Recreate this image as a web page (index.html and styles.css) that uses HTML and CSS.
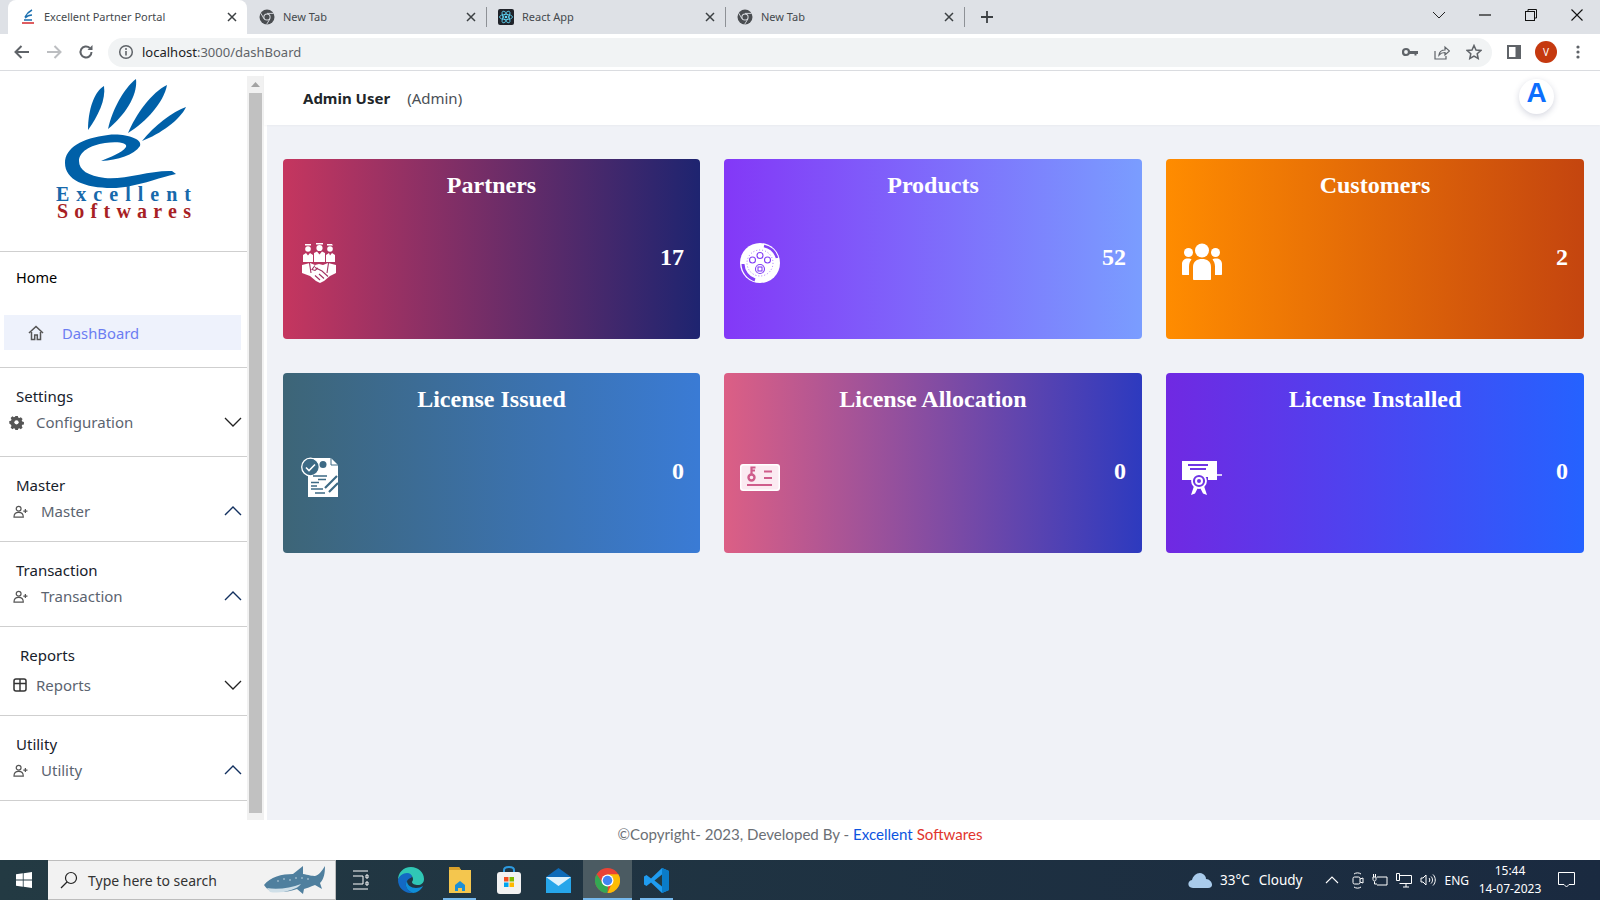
FILE: index.html
```html
<!DOCTYPE html>
<html lang="en">
<head>
<meta charset="utf-8">
<title>Excellent Partner Portal</title>
<link rel="stylesheet" href="styles.css">
</head>
<body>
<svg class="defs" width="0" height="0">
  <symbol id="chrome-fav" viewBox="0 0 16 16"><circle cx="8" cy="8" r="7.5" fill="#4a4d51"/><circle cx="8" cy="8" r="3.6" fill="#dee1e6"/><circle cx="8" cy="8" r="2.6" fill="#4a4d51"/><path d="M8 4.4h6.6M5 9.8 1.8 4.2M11 9.8 7.6 15.4" stroke="#dee1e6" stroke-width=".9"/></symbol>
  <symbol id="x" viewBox="0 0 12 12"><path d="M2 2l8 8M10 2l-8 8" stroke="#3c4043" stroke-width="1.5" fill="none"/></symbol>
  <symbol id="down" viewBox="0 0 18 10"><path d="M1 1l8 8 8-8" stroke="#222" stroke-width="1.3" fill="none"/></symbol>
  <symbol id="up" viewBox="0 0 18 10"><path d="M1 9l8-8 8 8" stroke="#12305f" stroke-width="1.4" fill="none"/></symbol>
  <symbol id="useradd" viewBox="0 0 16 14"><circle cx="6" cy="4" r="2.6" fill="none" stroke="#555" stroke-width="1.3"/><path d="M1 13c0-3.5 2-5 5-5s5 1.500 5 5z" fill="none" stroke="#555" stroke-width="1.3"/><path d="M11 6.500h4.500M13.250 4.300v4.400" stroke="#555" stroke-width="1.300"/></symbol>
</svg>

<header class="tabstrip">
  <div class="tab tab-active">
    <svg class="fav" viewBox="0 0 16 16"><path d="M5 8C7 4 10 2 12 1M5 9c2-2 5-3 7-3M4 11h8" stroke="#1a6fb0" stroke-width="1.400" fill="none"/><path d="M2 14h12" stroke="#d3272d" stroke-width="1.500"/></svg>
    <span class="tab-title">Excellent Partner Portal</span>
    <svg class="tab-x"><use href="#x"/></svg>
  </div>
  <div class="tab tab-sep">
    <svg class="fav"><use href="#chrome-fav"/></svg>
    <span class="tab-title">New Tab</span>
    <svg class="tab-x"><use href="#x"/></svg>
  </div>
  <div class="tab tab-sep">
    <svg class="fav" viewBox="0 0 16 16"><rect width="16" height="16" rx="2" fill="#20232a"/><g fill="none" stroke="#61dafb" stroke-width=".8"><ellipse cx="8" cy="8" rx="6.500" ry="2.600"/><ellipse cx="8" cy="8" rx="6.500" ry="2.600" transform="rotate(60 8 8)"/><ellipse cx="8" cy="8" rx="6.500" ry="2.600" transform="rotate(120 8 8)"/></g><circle cx="8" cy="8" r="1.300" fill="#61dafb"/></svg>
    <span class="tab-title">React App</span>
    <svg class="tab-x"><use href="#x"/></svg>
  </div>
  <div class="tab tab-sep">
    <svg class="fav"><use href="#chrome-fav"/></svg>
    <span class="tab-title">New Tab</span>
    <svg class="tab-x"><use href="#x"/></svg>
  </div>
  <svg class="newtab" viewBox="0 0 14 14"><path d="M7 1v12M1 7h12" stroke="#3c4043" stroke-width="1.800"/></svg>
  <div class="winctrls">
    <span class="winbtn"><svg width="14" height="8" viewBox="0 0 14 8"><path d="M1 1l6 6 6-6" stroke="#222" fill="none"/></svg></span>
    <span class="winbtn"><svg width="12" height="2" viewBox="0 0 12 2"><path d="M0 1h12" stroke="#111" stroke-width="1.200"/></svg></span>
    <span class="winbtn"><svg width="12" height="12" viewBox="0 0 12 12"><rect x=".5" y="2.500" width="9" height="9" fill="none" stroke="#111"/><path d="M3 2.500V.5h8.500V9H9.500" fill="none" stroke="#111"/></svg></span>
    <span class="winbtn"><svg width="12" height="12" viewBox="0 0 12 12"><path d="M.5.500l11 11M11.500.500l-11 11" stroke="#111" stroke-width="1.100"/></svg></span>
  </div>
</header>

<div class="toolbar">
  <span class="tbtn"><svg width="16" height="14" viewBox="0 0 16 14"><path d="M15 7H2M7.500 1 1.500 7l6 6" stroke="#5f6368" stroke-width="2" fill="none"/></svg></span>
  <span class="tbtn"><svg width="16" height="14" viewBox="0 0 16 14"><path d="M1 7h13M8.500 1l6 6-6 6" stroke="#bcbec1" stroke-width="2" fill="none"/></svg></span>
  <span class="tbtn"><svg width="16" height="16" viewBox="0 0 16 16"><path d="M13.500 8a5.500 5.500 0 1 1-1.700-4" stroke="#5f6368" stroke-width="2" fill="none"/><path d="M14.500 1v5h-5z" fill="#5f6368"/></svg></span>
  <div class="urlbar">
    <svg class="info" viewBox="0 0 16 16"><circle cx="8" cy="8" r="6.300" fill="none" stroke="#5f6368" stroke-width="1.500"/><path d="M8 7v4.500" stroke="#5f6368" stroke-width="1.600"/><circle cx="8" cy="4.900" r="1" fill="#5f6368"/></svg>
    <span class="url"><span class="url-host">localhost</span>:3000/dashBoard</span>
    <span class="urlicons">
      <span class="uicon"><svg width="16" height="10" viewBox="0 0 16 10"><circle cx="4" cy="5" r="3" fill="none" stroke="#5f6368" stroke-width="2.200"/><path d="M7 4h9v3h-1.500v1.500h-2V7H7z" fill="#5f6368"/></svg></span>
      <span class="uicon"><svg width="16" height="16" viewBox="0 0 16 16"><path d="M1 7v8h11v-3" fill="none" stroke="#5f6368" stroke-width="1.200"/><path d="M5 11c.5-3.500 3-5 6-5V3l4.500 4L11 11V8.500c-2.500 0-4.500.7-6 2.500z" fill="none" stroke="#5f6368" stroke-width="1.200"/></svg></span>
      <span class="uicon"><svg width="16" height="16" viewBox="0 0 16 16"><path d="M8 1.500l2 4.500 4.800.5-3.600 3.200 1 4.800L8 12.100 3.800 14.500l1-4.800L1.200 6.500 6 6z" fill="none" stroke="#5f6368" stroke-width="1.500"/></svg></span>
    </span>
  </div>
  <span class="tbtn tbtn-first"><svg width="14" height="14" viewBox="0 0 14 14"><rect width="14" height="14" fill="#5f6368"/><rect x="2" y="2" width="6.500" height="10" fill="#fff"/></svg></span>
  <span class="tbtn"><span class="profile">V</span></span>
  <span class="tbtn"><svg width="4" height="14" viewBox="0 0 4 14"><circle cx="2" cy="2" r="1.600" fill="#5f6368"/><circle cx="2" cy="7" r="1.600" fill="#5f6368"/><circle cx="2" cy="12" r="1.600" fill="#5f6368"/></svg></span>
</div>

<div class="app">
  <aside class="sidebar">
    <div class="logo">
      <svg class="logo-svg" viewBox="0 71 247 180">
        <g fill="#0060a8">
          <path d="M88 130C88 110 94 92 104 86C106 100 98 116 88 130Z"/>
          <path d="M108 129C112 110 124 88 136 79C138 96 124 116 108 129Z"/>
          <path d="M128 133C136 114 152 92 167 85C164 102 146 122 128 133Z"/>
          <path d="M142 141C154 126 172 112 186 107C180 120 160 134 142 141Z"/>
          <path d="M101 161C118 160 134 155 140 146C143 139 125 133 108 135C82 138 65 148 65 163C65 180 85 188 112 188C135 188 160 177 176 174L172 171C150 170 125 180 105 178C88 176 79 170 79 161C79 152 90 145 105 143C118 141 128 143 126 147C122 153 110 157 101 161Z"/>
        </g>
        <text class="logo-t1" x="56" y="201" textLength="135" lengthAdjust="spacing">Excellent</text>
        <text class="logo-t2" x="57" y="218" textLength="134" lengthAdjust="spacing">Softwares</text>
      </svg>
    </div>
    <section class="nav-home">
      <div class="nav-label">Home</div>
      <div class="nav-active">
        <svg class="ic-home" viewBox="0 0 16 16"><path d="M1 8l7-6.500L15 8" fill="none" stroke="#555" stroke-width="1.600"/><path d="M3.500 7v7.500h3.200V10h2.600v4.500h3.200V7" fill="none" stroke="#555" stroke-width="1.500"/></svg>
        <span>DashBoard</span>
      </div>
    </section>
    <section class="nav-sec nav-settings">
      <div class="nav-label">Settings</div>
      <div class="nav-row nav-row-gear">
        <svg class="ic-gear" viewBox="0 0 16 16"><path d="M6.600 1h2.800l.4 1.900 1.300.6 1.700-1 2 2-1 1.700.6 1.300 1.900.4v2.800l-1.900.4-.6 1.300 1 1.700-2 2-1.700-1-1.300.6-.4 1.800H6.600l-.4-1.800-1.300-.6-1.700 1-2-2 1-1.700-.6-1.300L-.3 9.700V6.900l1.900-.4.6-1.300-1-1.700 2-2 1.700 1 1.300-.6z" fill="#555" transform="translate(.6 0) scale(.94)"/><circle cx="8" cy="7.800" r="2.300" fill="#fff"/></svg>
        <span class="nav-text">Configuration</span>
        <svg class="chev"><use href="#down"/></svg>
      </div>
    </section>
    <section class="nav-sec">
      <div class="nav-label">Master</div>
      <div class="nav-row">
        <svg class="ic-user"><use href="#useradd"/></svg>
        <span class="nav-text">Master</span>
        <svg class="chev"><use href="#up"/></svg>
      </div>
    </section>
    <section class="nav-sec">
      <div class="nav-label">Transaction</div>
      <div class="nav-row">
        <svg class="ic-user"><use href="#useradd"/></svg>
        <span class="nav-text">Transaction</span>
        <svg class="chev"><use href="#up"/></svg>
      </div>
    </section>
    <section class="nav-sec nav-reports">
      <div class="nav-label">Reports</div>
      <div class="nav-row">
        <svg class="ic-table" viewBox="0 0 14 14"><rect x="1" y="1" width="12" height="12" rx="2" fill="none" stroke="#333" stroke-width="1.500"/><path d="M1 5.500h12M7 1v12" stroke="#333" stroke-width="1.400"/></svg>
        <span class="nav-text nav-text-reports">Reports</span>
        <svg class="chev"><use href="#down"/></svg>
      </div>
    </section>
    <section class="nav-sec">
      <div class="nav-label">Utility</div>
      <div class="nav-row">
        <svg class="ic-user"><use href="#useradd"/></svg>
        <span class="nav-text">Utility</span>
        <svg class="chev"><use href="#up"/></svg>
      </div>
    </section>
  </aside>
  <div class="scroll">
    <svg class="scroll-arrow" width="9" height="5" viewBox="0 0 9 5"><path d="M4.500 0 9 5H0z" fill="#a3a3a3"/></svg>
    <div class="scroll-thumb"></div>
  </div>

  <main class="main">
    <div class="topbar">
      <b class="user">Admin User</b>
      <span class="role">(Admin)</span>
      <span class="avatar">A</span>
    </div>
    <div class="content">
      <article class="card c-partners">
        <h2>Partners</h2>
        <div class="card-body">
          <svg class="card-ic ic-partners" viewBox="0 0 34 40" fill="#fff">
            <path d="M3 1h6v1.500H3zM14 0h7v1.500h-7zM25 1h5l1 1.500h-6z"/>
            <circle cx="6" cy="6" r="2.800"/><circle cx="17.500" cy="5" r="3.100"/><circle cx="28" cy="6" r="2.800"/>
            <path d="M1 19v-7l3-2 2 2.500 2-2.500 3 2v7zM12 19v-9l3-1.500 2.500 3 2.500-3 3 1.500v9zM24 19v-7l3-2 1 2.500 2-2.500 3 2v7z"/>
            <path d="M0 22l8-2 5 2 4-1 4 1 5-2 8 2v8l-6 3-6 5-4 2-4-2-6-5-8-3z"/>
            <path d="M13 24.500l7 3.500 6 5.500M17 31l5 4.500M13 32.500l5 4.500M7.500 20l1.500 10M26.500 20l-1.500 10M13 22.500l-3 4 3 1 3-2.500" stroke="#a33363" stroke-width="1.100" fill="none"/>
          </svg>
          <span class="num">17</span>
        </div>
      </article>
      <article class="card c-products">
        <h2>Products</h2>
        <div class="card-body">
          <svg class="card-ic" viewBox="0 0 40 40">
            <circle cx="20" cy="20" r="20" fill="#fff"/>
            <path d="M24 3A17.500 17.500 0 0 1 37 15" fill="none" stroke="#8340f6" stroke-width="2.500"/>
            <path d="M3 21A17.500 17.500 0 0 0 15 37" fill="none" stroke="#8340f6" stroke-width="3"/>
            <g fill="none" stroke="#8340f6" stroke-width="1.100">
              <circle cx="20" cy="20" r="13" stroke-dasharray="1 2" stroke-width=".7"/>
              <circle cx="20" cy="12.500" r="3"/><circle cx="12.500" cy="17" r="3"/><circle cx="27.500" cy="17" r="3"/><circle cx="20" cy="26" r="4.500"/>
              <rect x="18" y="24" width="4" height="4"/>
            </g>
          </svg>
          <span class="num">52</span>
        </div>
      </article>
      <article class="card c-customers">
        <h2>Customers</h2>
        <div class="card-body">
          <svg class="card-ic" viewBox="0 0 40 40" fill="#fff">
            <circle cx="20" cy="7.500" r="7"/><circle cx="6.500" cy="9.500" r="4.500"/><circle cx="33.500" cy="9.500" r="4.500"/>
            <path d="M11 36V24c0-5.500 4-8 9-8s9 2.500 9 8v12c0 .7-.5 1-1 1H12c-.5 0-1-.3-1-1z"/>
            <path d="M0 31V21c0-3.500 2.500-5.500 6-5.500 1.500 0 3 .4 3.500 1-1.500 1.800-2.500 4-2.500 7V32H1c-.6 0-1-.4-1-1zM40 31V21c0-3.500-2.500-5.500-6-5.500-1.500 0-3 .4-3.500 1 1.500 1.800 2.500 4 2.500 7V32h6c.6 0 1-.4 1-1z"/>
          </svg>
          <span class="num">2</span>
        </div>
      </article>
      <article class="card c-issued">
        <h2>License Issued</h2>
        <div class="card-body">
          <svg class="card-ic ic-issued" viewBox="0 0 37 40">
            <path d="M7 1h23l7 7v32H7z" fill="#fff"/>
            <path d="M30 1v7h7" fill="none" stroke="#3d6a85" stroke-width="1"/>
            <circle cx="9.500" cy="10" r="8.800" fill="#3d6a85" stroke="#fff" stroke-width="1.300"/>
            <path d="M5 10.500l3 3 6-6" fill="none" stroke="#fff" stroke-width="1.600"/>
            <circle cx="22" cy="7.500" r="3.500" fill="#3d6a85"/>
            <path d="M12 19h14M17 22.500h8M10 25.500h8M10 29h6M10 32h12M14 36h10" stroke="#3d6a85" stroke-width="1.500"/>
            <path d="M24 31l12-12M28 35l9-9" stroke="#3d6a85" stroke-width="2.200"/>
          </svg>
          <span class="num">0</span>
        </div>
      </article>
      <article class="card c-alloc">
        <h2>License Allocation</h2>
        <div class="card-body">
          <svg class="card-ic ic-alloc" viewBox="0 0 40 27">
            <rect width="40" height="27" rx="3" fill="#fff"/>
            <rect x="1.500" y="1.500" width="37" height="24" rx="2" fill="#fbeaf1"/>
            <circle cx="11.500" cy="13.500" r="3" fill="none" stroke="#cf5c8b" stroke-width="2.400"/>
            <path d="M11.500 10V3.500h4M11.500 6.500h3.500" fill="none" stroke="#cf5c8b" stroke-width="2.200"/>
            <path d="M24 7.500h8M24 14h8M7 21h25" stroke="#cf5c8b" stroke-width="2"/>
          </svg>
          <span class="num">0</span>
        </div>
      </article>
      <article class="card c-installed">
        <h2>License Installed</h2>
        <div class="card-body">
          <svg class="card-ic" viewBox="0 0 40 40">
            <path d="M0 4h35v19H26v-3H14v3H0z" fill="#fff"/>
            <path d="M6 8h20M8 12h16" stroke="#7035e5" stroke-width="2"/>
            <path d="M34 7v8h-3l3 3h6M28 12v7h6" fill="none" stroke="#fff" stroke-width="1.600"/>
            <circle cx="17" cy="24" r="7" fill="#7035e5" stroke="#fff" stroke-width="1.800"/>
            <circle cx="17" cy="24" r="3" fill="none" stroke="#fff" stroke-width="2"/>
            <path d="M12 29l-3 9 4-1.500 3-6M22 29l3 9-4-1.500-3-6" fill="#fff"/>
          </svg>
          <span class="num">0</span>
        </div>
      </article>
    </div>
  </main>
</div>

<footer class="footer">©Copyright- 2023, Developed By - <span class="f-blue">Excellent</span> <span class="f-red">Softwares</span></footer>

<div class="taskbar">
  <span class="start"><svg width="16" height="16" viewBox="0 0 16 16" fill="#fff"><path d="M0 2.300 6.800 1.300v6.300H0zM7.600 1.200 16 0v7.600H7.600zM0 8.400h6.800v6.300L0 13.700zM7.600 8.400H16V16l-8.400-1.200z"/></svg></span>
  <div class="search">
    <svg class="search-ic" viewBox="0 0 18 18"><circle cx="11" cy="7" r="5.500" fill="none" stroke="#222" stroke-width="1.200"/><path d="M7 11l-6 6" stroke="#222" stroke-width="1.300"/></svg>
    <span>Type here to search</span>
    <svg class="shark" viewBox="0 0 62 30"><path d="M0 19C6 11 18 8 29 8l10-8 0 8c5 1 10 2 12 2 4-1 7-5 10-10 0 7-1 13-5 17l2 6-7-4c-5 2-8 3-11 4l-1 5-6-5c-8 3-18 4-26 2-3-1-5-3-7-6z" fill="#4f7f9e"/><path d="M3 22c10 2 24 0 34-4-4 6-20 10-31 8z" fill="#cfdfe8"/><g fill="#c9dbe6"><circle cx="14" cy="15" r=".8"/><circle cx="20" cy="13" r=".8"/><circle cx="26" cy="14" r=".8"/><circle cx="32" cy="12" r=".8"/><circle cx="38" cy="12" r=".8"/><circle cx="44" cy="13" r=".8"/></g></svg>
  </div>
  <div class="apps">
    <span class="app-ic"><svg width="16" height="20" viewBox="0 0 16 20"><path d="M0 1h15M0 19h15M0 6h10v8H0M13 5h2v3h-2zM13 12h2v3h-2z" fill="none" stroke="#fff"/></svg></span>
    <span class="app-ic"><svg width="26" height="26" viewBox="0 0 26 26"><path d="M13 0C20 0 26 5 26 12c0 4-3 6-6 6-3 0-6-1-6-3 0-1 1-1 1-3 0-3-3-5-6-5C4 7 1 10 0 13 0 6 5 0 13 0z" fill="#30c7b5"/><path d="M0 13c1-4 5-7 9-7 3 0 5 2 5 4-1 1-3 1-5 4-3 4 0 10 6 12C7 27 0 21 0 13z" fill="#1369c4"/><path d="M15 26c-6-2-9-8-6-12 0 4 4 7 9 7 3 0 5-1 7-2-2 4-6 7-10 7z" fill="#0f8ed8"/></svg></span>
    <span class="app-ic app-run"><svg width="22" height="26" viewBox="0 0 22 26"><path d="M0 0h10l2 3h10v23H0z" fill="#f4c64e"/><path d="M0 0h10l2 3H0z" fill="#d9a12b"/><path d="M6 24v-6l5-4 5 4v6h-3v-3H9v3z" fill="#1c8fd6"/></svg></span>
    <span class="app-ic"><svg width="24" height="28" viewBox="0 0 24 28"><path d="M7 8V4c0-4 10-4 10 0v4" fill="none" stroke="#2d9be0" stroke-width="2"/><rect y="6" width="24" height="22" rx="3" fill="#f2f2f2"/><rect x="7" y="11" width="4.500" height="4.500" fill="#f25022"/><rect x="12.500" y="11" width="4.500" height="4.500" fill="#7fba00"/><rect x="7" y="16.500" width="4.500" height="4.500" fill="#00a4ef"/><rect x="12.500" y="16.500" width="4.500" height="4.500" fill="#ffb900"/></svg></span>
    <span class="app-ic"><svg width="25" height="25" viewBox="0 0 25 25"><path d="M0 9 12.500 0 25 9v16H0z" fill="#0d6bb8"/><path d="M0 9h25v16H0z" fill="#26a6ea"/><path d="M0 9l12.500 9L25 9H0z" fill="#fff" opacity=".85"/></svg></span>
    <span class="app-ic app-active"><svg width="25" height="25" viewBox="0 0 25 25"><circle cx="12.500" cy="12.500" r="12.500" fill="#ea4335"/><path d="M12.500 25 A12.500 12.500 0 0 1 1.700 6.200L8 15.500l5 2.500z" fill="#34a853"/><path d="M12.500 25a12.500 12.500 0 0 0 10.800-18.800H12.500L17 15z" fill="#fbbc05"/><circle cx="12.500" cy="12.500" r="6" fill="#fff"/><circle cx="12.500" cy="12.500" r="4.700" fill="#4285f4"/></svg></span>
    <span class="app-ic app-run2"><svg width="25" height="25" viewBox="0 0 25 25"><path d="M18 0l7 3v19l-7 3L7 14.500 2.500 18 0 16.500v-8L2.500 7 7 10.500z" fill="#1f9cf0"/><path d="M18 6.500 10.500 12.500 18 18.500z" fill="#233a42"/><path d="M18 0l7 3v19l-7 3z" fill="#0a7cc9"/></svg></span>
  </div>
  <div class="tray">
    <svg class="cloud" width="25" height="16" viewBox="0 0 25 16"><path d="M5 16c-6 0-6-7-1-8 1-5 7-9 11-6 2 1 3 3 3 5 6 0 9 9 2 9z" fill="#a9cbeb"/></svg>
    <span class="temp">33°C</span>
    <span class="cond">Cloudy</span>
    <svg class="t-chev" width="14" height="8" viewBox="0 0 14 8"><path d="M1 7l6-6 6 6" fill="none" stroke="#fff" stroke-width="1.100"/></svg>
    <svg class="t-meet" width="12" height="17" viewBox="0 0 12 17"><path d="M2 2c2-1.500 5-1.500 7 0M2 15c2 1.500 5 1.500 7 0" fill="none" stroke="#fff"/><rect x="1" y="5" width="7" height="7" rx="1.500" fill="none" stroke="#fff"/><path d="M8 7l3-1v5l-3-1" fill="none" stroke="#fff"/></svg>
    <svg class="t-plug" width="16" height="13" viewBox="0 0 16 13"><path d="M5 3h10v8H5" fill="none" stroke="#fff"/><path d="M1 3v2.500c0 2 3 2 3 0V3zM2.500 7.500V10H5M1.500 3V0M3.500 3V0" fill="none" stroke="#fff"/></svg>
    <svg class="t-net" width="16" height="15" viewBox="0 0 16 15"><path d="M.5.500h3v7h-3zM3.500 2.500h12v8h-12M7 14h6M10 10.500V14" fill="none" stroke="#fff"/></svg>
    <svg class="t-vol" width="16" height="14" viewBox="0 0 16 14"><path d="M1 5h2l3-3v10L3 9H1zM9 5c1 1 1 3 0 4M11 3.500c2 2 2 5 0 7M13 1.500c3 3 3 8 0 11" fill="none" stroke="#fff"/></svg>
    <span class="lang">ENG</span>
    <span class="clock"><span>15:44</span><span>14-07-2023</span></span>
    <svg class="t-note" width="17" height="16" viewBox="0 0 17 16"><path d="M.5.500h16v12H11L8.500 15 6 12.500H.5z" fill="none" stroke="#fff"/></svg>
  </div>
</div>
</body>
</html>
```

FILE: styles.css
```css
* { box-sizing: border-box; }
html, body { margin: 0; padding: 0; }
body { width: 1600px; height: 900px; overflow: hidden; background: #fff; font-family: "Noto Sans", sans-serif; }
.defs { position: absolute; }

/* browser chrome */
.tabstrip { height: 34px; background: #dee1e6; display: flex; padding-left: 8px; align-items: stretch; }
.tab { width: 239px; display: flex; align-items: center; padding: 0 8px 0 12px; position: relative; }
.tab-active { background: #fff; border-radius: 8px 8px 0 0; }
.tab-sep::after { content: ""; position: absolute; right: -1px; top: 7px; height: 20px; width: 1px; background: #8e9196; }
.fav { width: 16px; height: 16px; flex: none; }
.tab-title { flex: 1; margin: 0 0 2px 8px; font-size: 11px; color: #45494d; }
.tab-x { width: 12px; height: 12px; flex: none; margin-right: 1px; }
.newtab { width: 14px; height: 14px; margin: 10px 0 0 16px; }
.winctrls { margin-left: auto; display: flex; }
.winbtn { width: 46px; display: flex; align-items: center; justify-content: center; height: 30px; }

.toolbar { height: 37px; background: #fff; border-bottom: 1px solid #dadce0; display: flex; align-items: center; padding: 0 6px; }
.tbtn { width: 32px; height: 32px; flex: none; display: flex; align-items: center; justify-content: center; }
.tbtn-first { margin-left: 6px; }
.urlbar { flex: 1; height: 29px; margin: 0 0 0 6px; background: #f1f3f4; border-radius: 15px; display: flex; align-items: center; padding: 0 2px 0 10px; }
.info { width: 16px; height: 16px; }
.url { margin-left: 8px; font-size: 13px; color: #5f6368; }
.url-host { color: #202124; }
.urlicons { margin-left: auto; display: flex; }
.uicon { width: 32px; display: flex; align-items: center; justify-content: center; }
.profile { width: 22px; height: 22px; border-radius: 50%; background: #c5390f; color: #fff; font-size: 10px; display: flex; align-items: center; justify-content: center; }

/* app */
.app { height: 749px; display: flex; }
.sidebar { width: 247px; flex: none; background: #fff; }
.logo { height: 181px; border-bottom: 1px solid #cfcfcf; }
.logo-svg { display: block; width: 247px; height: 180px; }
.logo-t1 { font: bold 20px "Liberation Serif", serif; fill: #1769ab; }
.logo-t2 { font: bold 20px "Liberation Serif", serif; fill: #a81f25; }

.nav-label { font-size: 15px; line-height: 22px; color: #17212b; padding-left: 16px; }
.nav-home { height: 116px; padding-top: 14px; border-bottom: 1px solid #cfcfcf; }
.nav-home .nav-label { color: #000; font-size: 14.500px; }
.nav-active { height: 35px; margin: 27px 6px 0 4px; background: #eef2fc; display: flex; align-items: center; color: #6b7df2; font-size: 14.800px; padding-left: 24px; }
.ic-home { width: 16px; height: 16px; margin-right: 18px; }
.nav-sec { padding: 17px 0 17px; border-bottom: 1px solid #cfcfcf; }
.nav-settings { padding: 17px 0 21px; }
.nav-reports .nav-row { margin-top: 6px; }
.nav-reports .nav-label { padding-left: 20px; }
.nav-row { height: 26px; margin-top: 2px; display: flex; align-items: center; padding: 0 5px 0 13px; color: #5b6470; font-size: 15px; }
.nav-row-gear { padding-left: 9px; }
.ic-gear { width: 15px; height: 15px; flex: none; }
.ic-user { width: 15px; height: 13px; flex: none; }
.ic-table { width: 14px; height: 14px; flex: none; }
.nav-text { margin-left: 13px; flex: 1; }
.nav-row-gear .nav-text { margin-left: 12px; }
.nav-text-reports { margin-left: 9px; }
.chev { width: 18px; height: 10px; flex: none; }

.scroll { width: 17px; flex: none; margin-top: 5px; background: #f1f1f1; display: flex; flex-direction: column; align-items: center; }
.scroll-arrow { margin-top: 6px; flex: none; }
.scroll-thumb { width: 13px; flex: 1; margin: 6px 0 7px; background: #c1c1c1; }

.main { flex: 1; display: flex; flex-direction: column; background: #fff; min-width: 0; }
.topbar { height: 54px; flex: none; display: flex; align-items: center; padding: 0 46px 0 39px; background: #fff; box-shadow: 0 1px 2px rgba(0,0,0,.03); font-size: 15px; color: #212529; position: relative; }
.user { font-weight: 700; }
.role { margin-left: 17px; color: #4a4f55; }
.avatar { margin: -3px 0 0 auto; width: 35px; height: 35px; border-radius: 50%; background: #fff; box-shadow: 0 2px 6px rgba(60,70,110,.22); color: #0d6efd; font: bold 28px/27px "Liberation Sans", sans-serif; text-align: center; }
.content { flex: 1; margin-left: 3px; background: #f0f2f7; padding: 34px 16px 0; display: grid; grid-template-columns: 417px 418px 418px; grid-auto-rows: 180px; gap: 34px 24px; align-content: start; }

.card { border-radius: 4px; color: #fff; display: flex; flex-direction: column; font-family: "Liberation Serif", serif; }
.card h2 { margin: 0; padding-top: 12px; font-size: 24px; line-height: 28px; font-weight: 700; text-align: center; }
.card-body { height: 80px; margin-top: 24px; display: flex; align-items: center; justify-content: space-between; padding: 0 16px; }
.card-ic { width: 40px; height: 40px; }
.ic-partners { width: 34px; margin-left: 3px; }
.ic-issued { width: 37px; margin-left: 2px; }
.ic-alloc { height: 27px; }
.num { font-size: 24px; font-weight: 700; margin-bottom: 12px; }
.c-partners { background: linear-gradient(90deg, #c5365f, #1e2470); }
.c-products { background: linear-gradient(90deg, #8338f7, #7a9dff); }
.c-customers { background: linear-gradient(90deg, #ff8c00, #c4450f); }
.c-issued { background: linear-gradient(90deg, #3d6577, #3a7bd5); }
.c-alloc { background: linear-gradient(90deg, #dc5f85, #2d3abf); }
.c-installed { background: linear-gradient(90deg, #7029e2, #2562ff); }

.footer { height: 40px; background: #fff; text-align: center; font: 15.100px/28px Lato, sans-serif; color: #6b6f75; }
.f-blue { color: #0d54e0; }
.f-red { color: #e1352d; }

/* taskbar */
.taskbar { height: 40px; display: flex; align-items: stretch; background: linear-gradient(90deg, #233a43, #1a2a40); color: #fff; }
.start { width: 48px; display: flex; align-items: center; justify-content: center; }
.search { width: 288px; background: #f2f2f2; border-top: 1px solid #bdbdbd; border-bottom: 1px solid #bdbdbd; border-right: 1px solid #bdbdbd; display: flex; align-items: center; padding-left: 12px; color: #333; font-size: 14px; position: relative; }
.search-ic { width: 18px; height: 18px; margin-right: 10px; flex: none; }
.shark { position: absolute; left: 216px; top: 5px; width: 62px; height: 30px; }
.apps { display: flex; }
.app-ic { width: 49.200px; display: flex; align-items: center; justify-content: center; position: relative; }
.app-ic:first-child { width: 50px; }
.app-active { background: #4b5b62; box-shadow: inset 0 -2px 0 #76b9ed; }
.app-run::after, .app-run2::after { content: ""; position: absolute; bottom: 0; height: 2px; left: 8px; right: 8px; background: #76b9ed; }
.tray { margin-left: auto; display: flex; align-items: center; font-size: 13.500px; padding-right: 25px; }
.temp { margin-left: 7px; }
.cond { margin-left: 9px; }
.t-chev { margin-left: 23px; }
.t-meet { margin-left: 13px; }
.t-plug { margin-left: 8px; }
.t-net { margin-left: 8px; }
.t-vol { margin-left: 8px; }
.lang { margin-left: 8px; font-size: 12px; }
.clock { width: 82px; display: flex; flex-direction: column; align-items: center; font-size: 12px; line-height: 18px; }
.t-note { margin-left: 7px; }
```
